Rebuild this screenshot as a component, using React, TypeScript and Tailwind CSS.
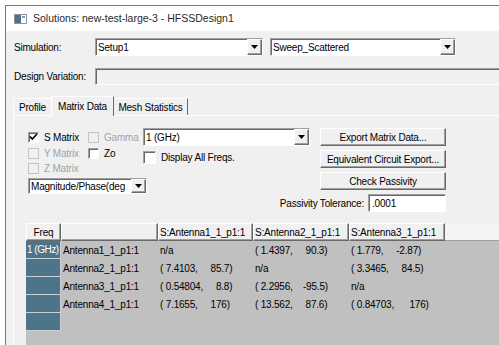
import React from "react";

const sunken =
  "border border-t-[#a0a0a0] border-l-[#a0a0a0] border-b-white border-r-white shadow-[inset_1px_1px_0_#696969]";
const raised =
  "border border-t-white border-l-white border-b-[#696969] border-r-[#696969] shadow-[inset_-1px_-1px_0_#a0a0a0]";

const Arrow = () => (
  <svg width="7" height="4" viewBox="0 0 7 4">
    <path d="M0 0h7L3.5 4z" fill="#000" />
  </svg>
);

const Select: React.FC<{ value: string; className?: string; textClass?: string }> = ({
  value,
  className = "",
  textClass = "",
}) => (
  <div className={`flex items-stretch bg-white ${sunken} ${className}`}>
    <span className={`flex min-w-0 flex-1 items-center overflow-hidden whitespace-nowrap pl-[2px] ${textClass}`}>{value}</span>
    <span className={`flex w-[15px] shrink-0 items-center justify-center bg-[#f0f0f0] ${raised}`}>
      <Arrow />
    </span>
  </div>
);

const Check: React.FC<{
  label: string;
  checked?: boolean;
  disabled?: boolean;
  big?: boolean;
  className?: string;
}> = ({ label, checked, disabled, big, className = "" }) => (
  <div className={`flex items-center gap-[5px] ${className}`}>
    <span
      className={`flex shrink-0 items-center justify-center ${big ? "h-[13px] w-[13px]" : "h-[11px] w-[11px]"} ${
        disabled ? "border border-[#c4c4c4] bg-[#f0f0f0]" : `bg-white ${sunken}`
      }`}
    >
      {checked && (
        <svg width="9" height="8" viewBox="0 0 9 8">
          <path d="M1 3.5l2.3 2.5L8 1" fill="none" stroke="#000" strokeWidth="1.6" />
        </svg>
      )}
    </span>
    <span className={disabled ? "text-[#a3a3a3]" : "text-black"}>{label}</span>
  </div>
);

const Button: React.FC<{ label: string }> = ({ label }) => (
  <div className={`flex h-[18px] w-full items-center justify-center bg-[#f0f0f0] ${raised}`}>{label}</div>
);

const columns = ["S:Antenna1_1_p1:1", "S:Antenna2_1_p1:1", "S:Antenna3_1_p1:1"];
const colWidths = ["w-[95px]", "w-[96px]", "w-[96px]"];

const rows = [
  { name: "Antenna1_1_p1:1", values: ["n/a", "( 1.4397,     90.3)", "( 1.779,     -2.87)"] },
  { name: "Antenna2_1_p1:1", values: ["( 7.4103,     85.7)", "n/a", "( 3.3465,     84.5)"] },
  { name: "Antenna3_1_p1:1", values: ["( 0.54804,     8.8)", "( 2.2956,    -95.5)", "n/a"] },
  { name: "Antenna4_1_p1:1", values: ["( 7.1655,     176)", "( 13.562,     87.6)", "( 0.84703,      176)"] },
];

export default function App() {
  return (
    <div className="h-[345px] w-[499px] overflow-hidden bg-white pl-[5px] pt-[5px] font-['Liberation_Sans',Arial,sans-serif] text-[10px] tracking-[-0.2px] text-black">
      <div className="flex h-full flex-col border-l border-t border-[#3b87d6] bg-[#f0f0f0]">
        {/* title bar */}
        <div className="flex h-[25px] items-center gap-[6px] bg-white pl-[8px]">
          <svg width="13" height="10" viewBox="0 0 13 10">
            <rect x="0.5" y="0.5" width="12" height="9" fill="#fff" stroke="#8a96a3" />
            <rect x="1" y="1" width="6" height="8" fill="#54707f" />
            <rect x="8" y="2" width="3" height="2" fill="#6aa7d8" />
          </svg>
          <span className="text-[10.5px] tracking-normal text-[#2a2a2a]">Solutions: new-test-large-3 - HFSSDesign1</span>
        </div>

        {/* simulation */}
        <div className="mt-[7px] flex h-[18px] items-center pl-[8px]">
          <span className="w-[81px]">Simulation:</span>
          <Select value="Setup1" className="h-[18px] w-[168px]" />
          <Select value="Sweep_Scattered" className="ml-[7px] h-[18px] w-[186px]" />
        </div>

        {/* design variation */}
        <div className="mt-[12px] flex h-[17px] items-center pl-[8px]">
          <span className="w-[81px]">Design Variation:</span>
          <div className="h-[17px] flex-1 border border-r-0 border-t-[#a0a0a0] border-l-[#a0a0a0] border-b-white bg-[#f0f0f0] shadow-[inset_1px_1px_0_#696969]" />
        </div>

        {/* tabs */}
        <div className="mt-[11px] flex h-[19px] items-end pl-[7px]">
          <div className="flex h-[17px] w-[38px] items-center justify-center border-l border-t border-white">Profile</div>
          <div className="relative z-10 -mb-px flex h-[20px] w-[63px] items-center justify-center border-l border-r border-t border-l-white border-t-white border-r-[#696969] bg-[#f0f0f0] pb-px">
            Matrix Data
          </div>
          <div className="flex h-[17px] w-[74px] items-center justify-center border-r border-t border-t-white border-r-[#696969]">
            Mesh Statistics
          </div>
        </div>

        {/* panel */}
        <div className="ml-[7px] flex flex-1 flex-col border-l border-t border-white">
          <div className="flex pl-[14px] pt-[12px]">
            <div className="flex w-[282px] flex-col">
              <div className="flex h-[18px] items-center">
                <Check label="S Matrix" checked className="w-[60px]" />
                <Check label="Gamma" disabled className="w-[55px]" />
                <Select value="1 (GHz)" className="h-[18px] w-[167px]" />
              </div>
              <div className="flex">
                <div className="flex w-[115px] flex-col">
                  <div className="flex h-[14px] items-center">
                    <Check label="Y Matrix" disabled className="w-[60px]" />
                    <Check label="Zo" />
                  </div>
                  <div className="mt-px flex h-[14px] items-center">
                    <Check label="Z Matrix" disabled />
                  </div>
                </div>
                <Check label="Display All Freqs." big className="mt-[5px] h-[13px]" />
              </div>
              <Select value="Magnitude/Phase(deg" className="mt-[3px] h-[16px] w-[119px]" />
            </div>

            <div className="ml-[10px] flex w-[126px] flex-col items-end gap-[4px]">
              <Button label="Export Matrix Data..." />
              <Button label="Equivalent Circuit Export..." />
              <Button label="Check Passivity" />
              <div className="flex h-[18px] items-center whitespace-nowrap">
                <span>Passivity Tolerance:</span>
                <div className={`ml-[4px] flex h-[18px] w-[78px] items-center bg-white pl-[3px] ${sunken}`}>.0001</div>
              </div>
            </div>
          </div>

          {/* grid */}
          <div className="ml-[12px] mt-[11px] flex flex-1 flex-col">
            <div className="flex h-[18px]">
              <div className={`flex w-[35px] items-center justify-center bg-[#f0f0f0] ${raised}`}>Freq</div>
              <div className={`w-[97px] bg-[#f0f0f0] ${raised}`} />
              {columns.map((c, i) => (
                <div key={c} className={`flex ${colWidths[i]} items-center bg-[#f0f0f0] pl-[1px] ${raised}`}>
                  {c}
                </div>
              ))}
              <div className="flex-1 border-b border-[#a0a0a0] bg-[#f4f4f4]" />
            </div>
            <div className="flex-1 bg-[#c0c0c0]">
              {[...rows, null].map((r, idx) => (
                <div key={idx} className="flex h-[18px]">
                  <div className="flex w-[35px] items-center overflow-hidden whitespace-nowrap border-b border-r border-[#c9cfd2] bg-[#4d7589] pl-px tracking-[-0.5px] text-white">
                    {idx === 0 ? "1 (GHz)" : ""}
                  </div>
                  {r && (
                    <>
                      <div className="flex w-[97px] items-center pl-[2px]">{r.name}</div>
                      {r.values.map((v, i) => (
                        <div key={i} className={`flex ${colWidths[i]} items-center whitespace-pre pl-[2px]`}>
                          {v}
                        </div>
                      ))}
                    </>
                  )}
                </div>
              ))}
            </div>
          </div>
        </div>
      </div>
    </div>
  );
}
